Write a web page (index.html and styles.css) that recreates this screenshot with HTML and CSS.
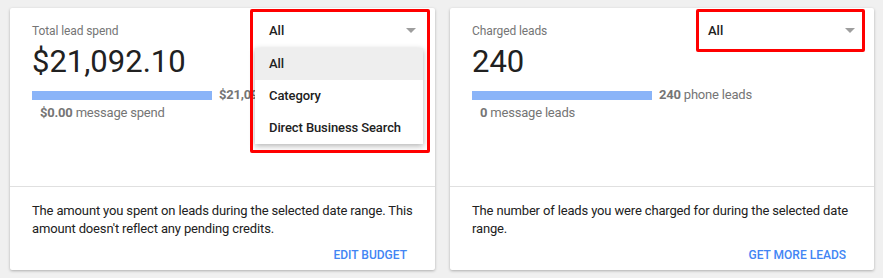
FILE: index.html
```html
<!DOCTYPE html>
<html>
<head>
    <title>Lead summary</title>
    <link rel="stylesheet" href="styles.css">
</head>
<body>
    <div class="cards">
        <div class="card">
            <div class="card-top">
                <div class="stats">
                    <div class="stat-title">Total lead spend</div>
                    <div class="stat-value">$21,092.10</div>
                    <div class="bar-row">
                        <div class="bar" style="width: 180px;"></div>
                        <span class="bar-label"><b>$21,092.10</b> phone spend</span>
                    </div>
                    <div class="sub-label"><b>$0.00</b> message spend</div>
                </div>
                <div class="select">
                    <span class="select-value">All</span>
                    <span class="arrow"></span>
                    <div class="menu">
                        <div class="menu-item selected">All</div>
                        <div class="menu-item">Category</div>
                        <div class="menu-item">Direct Business Search</div>
                    </div>
                    <div class="mark mark-open"></div>
                </div>
            </div>
            <div class="card-bottom">
                <p class="desc">The amount you spent on leads during the selected date range. This amount doesn't reflect any pending credits.</p>
                <div class="actions"><a class="action" href="#">Edit budget</a></div>
            </div>
        </div>

        <div class="card">
            <div class="card-top">
                <div class="stats">
                    <div class="stat-title">Charged leads</div>
                    <div class="stat-value">240</div>
                    <div class="bar-row">
                        <div class="bar" style="width: 180px;"></div>
                        <span class="bar-label"><b>240</b> phone leads</span>
                    </div>
                    <div class="sub-label"><b>0</b> message leads</div>
                </div>
                <div class="select">
                    <span class="select-value">All</span>
                    <span class="arrow"></span>
                    <div class="mark mark-closed"></div>
                </div>
            </div>
            <div class="card-bottom">
                <p class="desc">The number of leads you were charged for during the selected date range.</p>
                <div class="actions"><a class="action" href="#">Get more leads</a></div>
            </div>
        </div>
    </div>
</body>
</html>
```

FILE: styles.css
```css
* {
    margin: 0;
    padding: 0;
    box-sizing: border-box;
}

body {
    background: #f0f0f0;
    font-family: Roboto, 'Liberation Sans', sans-serif;
    color: #212121;
    padding: 8px 10px;
}

.cards {
    display: grid;
    grid-template-columns: 425px 424px;
    gap: 15px;
}

.card {
    background: #fff;
    height: 262px;
    border-radius: 2px;
    box-shadow: 0 1px 3px rgba(0, 0, 0, 0.28);
    display: flex;
    flex-direction: column;
}

.card-top {
    height: 179px;
    border-bottom: 1px solid #e0e0e0;
    display: flex;
    padding: 4px 12px 0 22px;
}

.stats {
    flex: 1;
    min-width: 0;
    padding-top: 11px;
}

.stat-title {
    font-size: 12px;
    line-height: 16px;
    letter-spacing: -0.1px;
    color: #757575;
}

.stat-value {
    font-size: 31px;
    line-height: 36px;
    margin-top: 5px;
    color: #212121;
}

.bar-row {
    display: flex;
    align-items: center;
    gap: 7px;
    margin-top: 6px;
    height: 18px;
}

.bar {
    height: 9px;
    flex-shrink: 0;
    background: #8ab4f8;
}

.bar-label,
.sub-label {
    font-size: 13px;
    line-height: 18px;
    letter-spacing: -0.2px;
    color: #757575;
    white-space: nowrap;
}

.sub-label {
    padding-left: 8px;
}

.select {
    position: relative;
    width: 168px;
    height: 36px;
    display: flex;
    align-items: center;
    justify-content: space-between;
    padding: 0 7px 0 14px;
    flex-shrink: 0;
}

.select-value {
    font-size: 13px;
    font-weight: 500;
}

.arrow {
    width: 0;
    height: 0;
    border-left: 5px solid transparent;
    border-right: 5px solid transparent;
    border-top: 5px solid #9e9e9e;
}

.menu {
    position: absolute;
    top: 36px;
    left: 0;
    width: 168px;
    background: #fff;
    box-shadow: 0 2px 6px rgba(0, 0, 0, 0.3);
    z-index: 2;
}

.menu-item {
    height: 32px;
    line-height: 32px;
    padding-left: 14px;
    font-size: 13px;
    font-weight: 500;
    letter-spacing: -0.1px;
    color: #212121;
}

.menu-item.selected {
    background: #eeeeee;
}

/* red highlight boxes drawn over the selects */
.mark {
    position: absolute;
    border: 3px solid #ff0000;
    border-radius: 2px;
    z-index: 3;
}

.mark-open {
    left: -5px;
    top: -3px;
    width: 180px;
    height: 144px;
}

.mark-closed {
    left: 2px;
    top: -3px;
    width: 169px;
    height: 43px;
}

.card-bottom {
    flex: 1;
    padding: 15px 12px 0 22px;
}

.desc {
    font-size: 13px;
    line-height: 18px;
    letter-spacing: -0.15px;
    color: #212121;
}

.actions {
    display: flex;
    justify-content: flex-end;
    margin-top: 7px;
    padding-right: 16px;
}

.action {
    font-size: 12px;
    font-weight: 500;
    line-height: 20px;
    color: #4285f4;
    text-decoration: none;
    text-transform: uppercase;
}
```
